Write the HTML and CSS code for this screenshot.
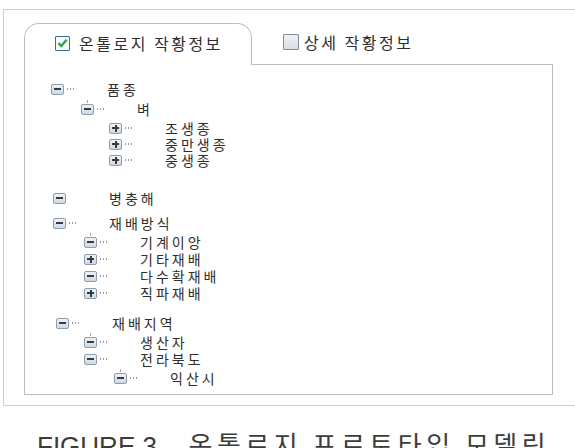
FILE: index.html
```html
<!DOCTYPE html>
<html>
  <head>
    <meta charset="utf-8">
    <link rel="stylesheet" href="styles.css">
  </head>
  <body>
    <div class="frame">
      <div class="tabs">
        <div class="tab active">
          <span class="check on">
            <svg width="11" height="10" viewBox="0 0 11 10"><path d="M1.5 5.2 L4.3 8 L9.6 1.8" fill="none" stroke="#2fa24a" stroke-width="2.4"/></svg>
          </span>
          온톨로지 작황정보
        </div>
        <div class="tab">
          <span class="check"></span>
          상세 작황정보
        </div>
        <div class="tab-fill"></div>
      </div>

      <div class="panel">
        <ul class="tree">
          <li class="row lv0"><span class="node minus"></span><span class="dots"></span><span class="label">품종</span></li>
          <li class="row lv1 mt4"><span class="node minus stem"></span><span class="dots"></span><span class="label">벼</span></li>
          <li class="row lv2 mt3"><span class="node plus stem"></span><span class="dots"></span><span class="label">조생종</span></li>
          <li class="row lv2"><span class="node plus"></span><span class="dots"></span><span class="label">중만생종</span></li>
          <li class="row lv2"><span class="node plus"></span><span class="dots"></span><span class="label">중생종</span></li>

          <li class="row lv0b mt22"><span class="node minus"></span><span class="dots blank"></span><span class="label">병충해</span></li>

          <li class="row lv0b mt9"><span class="node minus"></span><span class="dots"></span><span class="label">재배방식</span></li>
          <li class="row lv1b mt3"><span class="node minus stem"></span><span class="dots"></span><span class="label">기계이앙</span></li>
          <li class="row lv1b mt1"><span class="node plus"></span><span class="dots"></span><span class="label">기타재배</span></li>
          <li class="row lv1b mt1"><span class="node minus"></span><span class="dots"></span><span class="label">다수확재배</span></li>
          <li class="row lv1b mt1"><span class="node plus"></span><span class="dots"></span><span class="label">직파재배</span></li>

          <li class="row lv0c mt14"><span class="node minus"></span><span class="dots"></span><span class="label">재배지역</span></li>
          <li class="row lv1b mt3"><span class="node minus stem"></span><span class="dots"></span><span class="label">생산자</span></li>
          <li class="row lv1b mt1"><span class="node minus"></span><span class="dots"></span><span class="label">전라북도</span></li>
          <li class="row lv2b mt3"><span class="node minus stem"></span><span class="dots"></span><span class="label">익산시</span></li>
        </ul>
      </div>
    </div>

    <p class="caption"><span class="fig">FIGURE 3.</span> 온톨로지 프로토타입 모델링</p>
  </body>
</html>
```

FILE: styles.css
```css
body {
  margin: 0;
  background-color: #ffffff;
  overflow: hidden;
  font-family: "Noto Sans CJK KR", "Liberation Sans", sans-serif;
  color: #333333;
}

.frame {
  margin: 9px 0 0 3px;
  width: 572px;
  height: 397px;
  padding: 13px 0 0 20px;
  border: 1px solid #cdcdcd;
  border-right: none;
  box-sizing: border-box;
}

.tabs {
  display: flex;
  width: 529px;
  height: 42px;
}

.tab {
  display: flex;
  align-items: center;
  gap: 9px;
  height: 42px;
  box-sizing: border-box;
  padding: 0 0 3px 0;
  font-size: 16px;
  line-height: 20px;
  letter-spacing: 2.5px;
  color: #2e2e2e;
}

.tab.active {
  width: 228px;
  padding-left: 30px;
  border: 1px solid #bdbdbd;
  border-bottom: none;
  border-radius: 15px 15px 0 0;
}

.tab:not(.active) {
  padding-left: 31px;
  gap: 5px;
  border-bottom: 1px solid #bdbdbd;
}

.tab-fill {
  flex: 1;
  border-bottom: 1px solid #bdbdbd;
}

.check {
  display: inline-flex;
  align-items: center;
  justify-content: center;
  width: 16px;
  height: 16px;
  box-sizing: border-box;
  border: 1.5px solid #7a8ca0;
  border-radius: 1px;
  background: linear-gradient(#f2f2f2, #dadde2);
}

.check.on {
  width: 15px;
  height: 15px;
  border-color: #3a6d9a;
  background: #f6f9fb;
}

.check svg {
  display: block;
}

.panel {
  width: 529px;
  height: 330px;
  box-sizing: border-box;
  border: 1px solid #bdbdbd;
  border-top: none;
}

.tree {
  list-style: none;
  margin: 0;
  padding: 16px 0 0 0;
}

.row {
  display: flex;
  align-items: center;
  height: 16px;
  font-size: 14px;
  line-height: 16px;
  letter-spacing: 3px;
  color: #2e2e2e;
}

.lv0 { padding-left: 26px; }
.lv0b { padding-left: 28px; }
.lv0c { padding-left: 31px; }
.lv1 { padding-left: 56px; }
.lv1b { padding-left: 59px; }
.lv2 { padding-left: 84px; }
.lv2b { padding-left: 89px; }

.mt1 { margin-top: 1px; }
.mt3 { margin-top: 3px; }
.mt4 { margin-top: 4px; }
.mt9 { margin-top: 9px; }
.mt14 { margin-top: 14px; }
.mt22 { margin-top: 22px; }

/* expand / collapse box */
.node {
  position: relative;
  flex: none;
  width: 13px;
  height: 11px;
  box-sizing: border-box;
  border: 1px solid #8b9db2;
  border-radius: 2px;
  background: linear-gradient(#eef2f6, #cfd9e4);
}

.node::before {
  content: "";
  position: absolute;
  left: 2px;
  top: 3.5px;
  width: 7px;
  height: 2px;
  background: #3a3a3a;
}

.node.plus::after {
  content: "";
  position: absolute;
  left: 4.5px;
  top: 1px;
  width: 2px;
  height: 7px;
  background: #3a3a3a;
}

/* short connector above the first child */
.node.minus.stem::after {
  content: "";
  position: absolute;
  left: 5px;
  top: -5px;
  width: 1px;
  height: 3px;
  background: #a8a8a8;
}

.dots {
  flex: none;
  width: 10px;
  height: 2px;
  margin: 0 0 0 2px;
  background-image: radial-gradient(circle, #9a9a9a 0.8px, transparent 1px);
  background-size: 3px 2px;
}

.dots.blank {
  background: none;
}

.label {
  margin-left: 31px;
}

.caption {
  margin: 22px 0 0 37px;
  font-family: "Noto Sans CJK KR", sans-serif;
  font-size: 26px;
  line-height: 32px;
  letter-spacing: 4.5px;
  color: #3c3c3c;
  white-space: nowrap;
}

.caption .fig {
  font-family: "Liberation Sans", sans-serif;
  letter-spacing: 0;
  margin-right: 14px;
}
```
